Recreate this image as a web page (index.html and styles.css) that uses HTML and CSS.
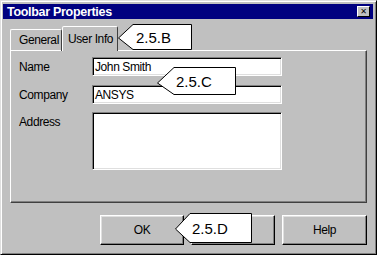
FILE: index.html
```html
<!DOCTYPE html>
<html lang="en">

<head>
    <meta charset="UTF-8">
    <title>Toolbar Properties</title>
    <link rel="stylesheet" href="styles.css">
</head>

<body>
    <div id="window">
        <div id="titlebar">
            <span class="title">Toolbar Properties</span>
            <span class="close">&#x2715;</span>
        </div>
        <div id="tabs">
            <div class="tab">General</div>
            <div class="tab selected">User Info</div>
        </div>
        <div id="panel">
            <div class="row">
                <label>Name</label>
                <div class="field">John Smith</div>
            </div>
            <div class="row">
                <label>Company</label>
                <div class="field">ANSYS</div>
            </div>
            <div class="row top">
                <label>Address</label>
                <div class="field area"></div>
            </div>
        </div>
        <div id="buttons">
            <div class="btn">OK</div>
            <div class="btn"></div>
            <div class="btn help">Help</div>
        </div>

        <div class="callout call-b">
            <svg width="74" height="26" viewBox="0 0 74 26"><polygon points="0.5,14 15,0.5 73.5,0.5 73.5,25.5 15,25.5" /></svg>
            <span>2.5.B</span>
        </div>
        <div class="callout call-c">
            <svg width="79" height="28" viewBox="0 0 79 28"><polygon points="0.5,16 17,0.5 78.5,0.5 78.5,27.5 17,27.5" /></svg>
            <span>2.5.C</span>
        </div>
        <div class="callout call-d">
            <svg width="77" height="30" viewBox="0 0 77 30"><polygon points="0.5,16 15,0.5 76.5,0.5 76.5,29.5 15,29.5" /></svg>
            <span>2.5.D</span>
        </div>
    </div>
</body>

</html>
```

FILE: styles.css
```css
* {
    margin: 0;
    padding: 0;
    box-sizing: border-box;
}

body {
    background: #c0c0c0;
    font-family: "Liberation Sans", Arial, sans-serif;
    font-size: 12px;
    letter-spacing: -0.4px;
    color: #000;
}

#window {
    position: relative;
    width: 377px;
    height: 255px;
    background: #c0c0c0;
    border: 1px solid;
    border-color: #dfdfdf #000 #000 #dfdfdf;
    box-shadow: inset 1px 1px 0 #fff, inset -1px -1px 0 #808080;
    padding: 3px 3px 0 2px;
    display: flex;
    flex-direction: column;
}

#titlebar {
    height: 15px;
    background: #000080;
    color: #fff;
    display: flex;
    align-items: center;
    justify-content: space-between;
    padding: 0 3px 0 4px;
}

.title {
    font-weight: bold;
    font-size: 12.5px;
    letter-spacing: -0.3px;
}

.close {
    width: 13px;
    height: 11px;
    background: #c0c0c0;
    color: #000;
    font-size: 8px;
    font-weight: bold;
    line-height: 9px;
    letter-spacing: 0;
    text-align: center;
    font-family: "DejaVu Sans", sans-serif;
    border: 1px solid;
    border-color: #fff #000 #000 #fff;
}

#tabs {
    display: flex;
    align-items: flex-end;
    margin: 7px 0 0 7px;
    height: 25px;
    position: relative;
    z-index: 1;
    margin-bottom: -1px;
}

.tab {
    height: 22px;
    width: 52px;
    padding-left: 8px;
    line-height: 21px;
    white-space: nowrap;
    border: 1px solid;
    border-bottom: none;
    border-color: #fff #404040 transparent #fff;
    border-radius: 2px 2px 0 0;
}

.tab.selected {
    height: 25px;
    width: 56px;
    padding-left: 5px;
    line-height: 24px;
    background: #c0c0c0;
}

#panel {
    margin: 0 6px 0 7px;
    height: 153px;
    border: 1px solid;
    border-color: #fff #404040 #404040 #fff;
    box-shadow: inset -1px -1px 0 #808080;
    padding: 6px 0 0 8px;
    display: flex;
    flex-direction: column;
    gap: 9px;
}

.row {
    display: flex;
    align-items: center;
}

.row.top {
    align-items: flex-start;
    margin-top: -1px;
}

.row.top label {
    padding-top: 3px;
}

label {
    width: 73px;
}

.field {
    width: 190px;
    height: 19px;
    background: #fff;
    border: 1px solid;
    border-color: #808080 #fff #fff #808080;
    box-shadow: inset 1px 1px 0 #000, inset -1px -1px 0 #dfdfdf;
    padding: 0 0 0 2px;
    line-height: 18px;
}

.field.area {
    height: 58px;
}

#buttons {
    display: flex;
    justify-content: flex-end;
    gap: 7px;
    margin: 12px 6px 0 0;
}

.btn {
    width: 84px;
    height: 30px;
    line-height: 28px;
    text-align: center;
    border: 1px solid;
    border-color: #fff #000 #000 #fff;
    box-shadow: inset -1px -1px 0 #808080, inset 1px 1px 0 #dfdfdf;
}

.btn.help {
    width: 85px;
}

.callout {
    position: absolute;
    z-index: 2;
    font-family: "Liberation Sans", Arial, sans-serif;
    font-size: 15px;
    letter-spacing: 0;
}

.callout svg {
    position: absolute;
    left: 0;
    top: 0;
}

.callout polygon {
    fill: #fff;
    stroke: #000;
    stroke-width: 1;
}

.callout span {
    position: relative;
    display: block;
}

.call-b {
    left: 117px;
    top: 23px;
    width: 74px;
    height: 26px;
}

.call-b span {
    padding: 5px 0 0 18px;
}

.call-c {
    left: 156px;
    top: 66px;
    width: 79px;
    height: 28px;
}

.call-c span {
    padding: 6px 0 0 19px;
}

.call-d {
    left: 174px;
    top: 212px;
    width: 77px;
    height: 30px;
}

.call-d span {
    padding: 7px 0 0 17px;
}
```
